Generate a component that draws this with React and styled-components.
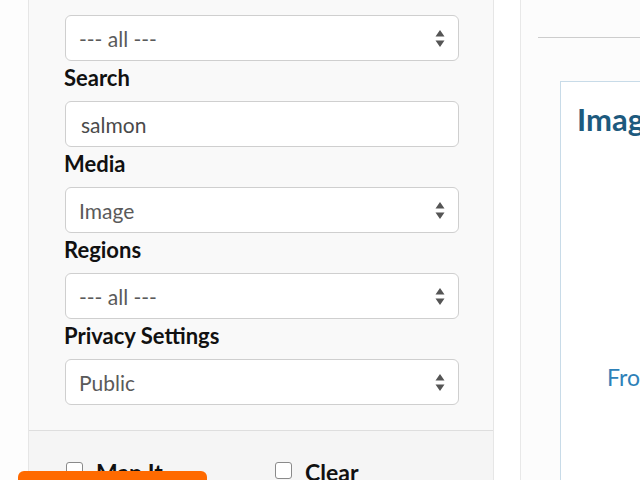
import React from 'react';
import styled, { createGlobalStyle } from 'styled-components';

const GlobalStyle = createGlobalStyle`
	html, body {
		margin: 0;
		height: 480px;
		overflow: hidden;
		background: #fdfdfd;
		font-family: Lato, "Open Sans", sans-serif;
	}
`;

const Page = styled.div`
	display: flex;
	height: 480px;
`;

const Gutter = styled.div`
	width: 28px;
	flex: none;
`;

const Sidebar = styled.aside`
	width: 466px;
	flex: none;
	display: flex;
	flex-direction: column;
	background: #f9f9f9;
	border-left: 1px solid #e6e6e6;
	border-right: 1px solid #e6e6e6;
	box-sizing: border-box;
`;

const Filters = styled.div`
	padding: 15px 34px 25px 36px;
	border-bottom: 1px solid #dedede;
`;

const Label = styled.div`
	padding-top: 4px;
	margin-bottom: 10px;
	margin-left: -1px;
	line-height: 26px;
	font-size: 22px;
	font-weight: 700;
	color: #111;
`;

const Field = styled.div`
	position: relative;
	height: 46px;
	box-sizing: border-box;
	border: 1px solid #cfcfcf;
	border-radius: 6px;
	background: #fff;
	display: flex;
	align-items: center;
	font-size: 21px;
	color: ${(p) => (p.$typed ? '#4a4a4a' : '#5a5a5a')};
	padding: 0 14px 0 ${(p) => (p.$typed ? '15px' : '13px')};
`;

const Arrows = styled.svg`
	position: absolute;
	right: 13px;
	top: 14px;
`;

const Select = ({ children }) => (
	<Field>
		{children}
		<Arrows width="10" height="17" viewBox="0 0 10 17">
			<path d="M5 0 L9.5 6.5 H0.5 Z M5 17 L9.5 10.5 H0.5 Z" fill="#555" />
		</Arrows>
	</Field>
);

const Actions = styled.div`
	flex: 1;
	background: #f5f5f5;
	display: grid;
	grid-template-columns: 209px 1fr;
	padding: 28px 0 0 37px;
`;

const Check = styled.label`
	display: flex;
	align-items: flex-start;
	gap: 13px;
	font-size: 23px;
	font-weight: 700;
	color: #111;
	line-height: 26px;
`;

const Box = styled.span`
	width: 17px;
	height: 17px;
	margin-top: 3px;
	box-sizing: border-box;
	border: 1px solid #8a8a8a;
	border-radius: 3px;
	background: #fff;
	flex: none;
`;

const Spacer = styled.div`
	width: 26px;
	flex: none;
	background: #fff;
`;

const Main = styled.main`
	flex: 1;
	background: #fcfcfc;
	border-left: 1px solid #e8e8e8;
	padding-top: 37px;
	display: flex;
	flex-direction: column;
`;

const Rule = styled.hr`
	margin: 0 0 0 17px;
	border: none;
	border-top: 1px solid #cdcdcd;
`;

const Card = styled.section`
	flex: 1;
	margin: 43px 0 0 39px;
	background: #fff;
	border: 1px solid #c8dbe8;
	border-right: none;
	border-bottom: none;
	padding: 17px 0 0 16px;
	white-space: nowrap;
	overflow: hidden;
`;

const CardTitle = styled.h2`
	margin: 0;
	font-size: 31px;
	font-weight: 700;
	line-height: 40px;
	color: #1d5a7e;
`;

const CardNote = styled.p`
	margin: 224px 0 0 30px;
	font-size: 23px;
	color: #2e81b8;
`;

const FeedbackTab = styled.div`
	position: fixed;
	left: 18px;
	top: 471px;
	width: 189px;
	height: 30px;
	background: #ff6a00;
	border-radius: 6px 6px 0 0;
`;

export default function App() {
	return (
		<>
			<GlobalStyle />
			<Page>
				<Gutter />
				<Sidebar>
					<Filters>
						<Select>--- all ---</Select>
						<Label>Search</Label>
						<Field $typed>salmon</Field>
						<Label>Media</Label>
						<Select>Image</Select>
						<Label>Regions</Label>
						<Select>--- all ---</Select>
						<Label>Privacy Settings</Label>
						<Select>Public</Select>
					</Filters>
					<Actions>
						<Check>
							<Box />
							Map It
						</Check>
						<Check>
							<Box />
							Clear
						</Check>
					</Actions>
				</Sidebar>
				<Spacer />
				<Main>
					<Rule />
					<Card>
						<CardTitle>Images</CardTitle>
						<CardNote>From</CardNote>
					</Card>
				</Main>
			</Page>
			<FeedbackTab />
		</>
	);
}
